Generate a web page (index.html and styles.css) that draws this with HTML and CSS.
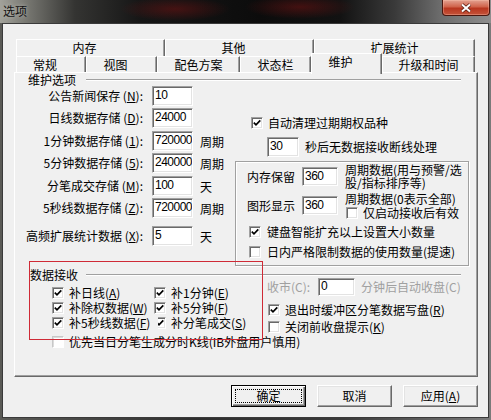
FILE: index.html
```html
<!DOCTYPE html>
<html>
<head>
<meta charset="utf-8">
<title>选项</title>
<link rel="stylesheet" href="styles.css">
</head>
<body>
<div class="window">
  <div class="titlebar">
    <span class="title">选项</span>
    <span class="close"><svg viewBox="0 0 14 10" class="xicon"><path class="xo" d="M3 1.5L11 8.5M11 1.5L3 8.5"/><path class="xi" d="M3 1.5L11 8.5M11 1.5L3 8.5"/></svg></span>
  </div>
  <div class="frame">
    <div class="tabs">
      <div class="tabrow back">
        <div class="tab w149 short">内存</div>
        <div class="tab w149 short">其他</div>
        <div class="tab w161">扩展统计</div>
      </div>
      <div class="tabrow front">
        <div class="tab w70 short">常规</div>
        <div class="tab w71 short">视图</div>
        <div class="tab w83">配色方案</div>
        <div class="tab w71">状态栏</div>
        <div class="tab w71 short sel">维护</div>
        <div class="tab w93">升级和时间</div>
      </div>
    </div>
    <div class="panel">
      <div class="group-head"><span>维护选项</span><i class="rule"></i></div>
      <div class="upper">
        <div class="fields">
          <span class="lbl">公告新闻保存 (<u>N</u>):</span><span class="inp w41">10</span><span class="unit"></span>
          <span class="lbl">日线数据存储 (<u>D</u>):</span><span class="inp w41">24000</span><span class="unit"></span>
          <span class="lbl">1分钟数据存储 (<u>1</u>):</span><span class="inp w41">720000</span><span class="unit">周期</span>
          <span class="lbl">5分钟数据存储 (<u>5</u>):</span><span class="inp w41">240000</span><span class="unit">周期</span>
          <span class="lbl">分笔成交存储 (<u>M</u>):</span><span class="inp w41">100</span><span class="unit">天</span>
          <span class="lbl">5秒线数据存储 (<u>Z</u>):</span><span class="inp w41">720000</span><span class="unit">周期</span>
          <span class="lbl">高频扩展统计数据 (<u>X</u>):</span><span class="inp w41">5</span><span class="unit">天</span>
        </div>
        <div class="side">
          <div class="chk auto-clean"><span class="cb"><svg viewBox="0 0 10 10"><path d="M1.8 4.6l2.2 2.2 4.3-4.4"/></svg></span><span class="t">自动清理过期期权品种</span></div>
          <div class="sec-row"><span class="inp w32">30</span><span class="sec-txt">秒后无数据接收断线处理</span></div>
          <div class="box">
            <div class="box-row row-a">
              <span class="box-lbl">内存保留</span>
              <span class="inp w36">360</span>
              <span class="note">周期数据(用与预警/选<br>股/指标排序等)</span>
            </div>
            <div class="box-row row-b">
              <span class="box-lbl">图形显示</span>
              <span class="inp w36">360</span>
              <div class="stack">
                <span class="note-line">周期数据(0表示全部)</span>
                <div class="chk only-recv"><span class="cb"></span><span class="t">仅启动接收后有效</span></div>
              </div>
            </div>
            <div class="chk row-c"><span class="cb"><svg viewBox="0 0 10 10"><path d="M1.8 4.6l2.2 2.2 4.3-4.4"/></svg></span><span class="t">键盘智能扩充以上设置大小数量</span></div>
            <div class="chk row-d"><span class="cb"></span><span class="t">日内严格限制数据的使用数量(提速)</span></div>
          </div>
        </div>
      </div>
      <div class="group-head second"><span>数据接收</span><i class="rule"></i></div>
      <div class="recv">
        <div class="recv-left">
          <div class="chk"><span class="cb"><svg viewBox="0 0 10 10"><path d="M1.8 4.6l2.2 2.2 4.3-4.4"/></svg></span><span class="t">补日线(<u>A</u>)</span></div>
          <div class="chk"><span class="cb"><svg viewBox="0 0 10 10"><path d="M1.8 4.6l2.2 2.2 4.3-4.4"/></svg></span><span class="t">补1分钟(<u>E</u>)</span></div>
          <div class="chk"><span class="cb"><svg viewBox="0 0 10 10"><path d="M1.8 4.6l2.2 2.2 4.3-4.4"/></svg></span><span class="t">补除权数据(<u>W</u>)</span></div>
          <div class="chk"><span class="cb"><svg viewBox="0 0 10 10"><path d="M1.8 4.6l2.2 2.2 4.3-4.4"/></svg></span><span class="t">补5分钟(<u>F</u>)</span></div>
          <div class="chk"><span class="cb"><svg viewBox="0 0 10 10"><path d="M1.8 4.6l2.2 2.2 4.3-4.4"/></svg></span><span class="t">补5秒线数据(<u>F</u>)</span></div>
          <div class="chk"><span class="cb clipped"><svg viewBox="0 0 10 10"><path d="M1.8 4.6l2.2 2.2 4.3-4.4"/></svg></span><span class="t">补分笔成交(<u>S</u>)</span></div>
        </div>
        <div class="recv-right">
          <div class="close-row"><span class="gray close-lbl">收市(C):</span><span class="inp w37">0</span><span class="gray after">分钟后自动收盘(C)</span></div>
          <div class="chk r2"><span class="cb"><svg viewBox="0 0 10 10"><path d="M1.8 4.6l2.2 2.2 4.3-4.4"/></svg></span><span class="t">退出时缓冲区分笔数据写盘(<u>R</u>)</span></div>
          <div class="chk r3"><span class="cb"></span><span class="t">关闭前收盘提示(<u>K</u>)</span></div>
        </div>
      </div>
      <div class="chk last"><span class="cb dis"></span><span class="t">优先当日分笔生成分时K线(IB外盘用户慎用)</span></div>
      <div class="annot"></div>
    </div>
    <div class="buttons">
      <div class="btn default">确定</div>
      <div class="btn">取消</div>
      <div class="btn">应用(<u>A</u>)</div>
    </div>
  </div>
</div>
</body>
</html>
```
FILE: styles.css
```css
* { box-sizing: border-box; }
html, body { margin: 0; padding: 0; }
body {
  width: 491px;
  height: 420px;
  overflow: hidden;
  background: #4a4a4a;
  font-family: "Noto Sans CJK SC", "Noto Sans", sans-serif;
  font-size: 12px;
  line-height: 12px;
  color: #000;
}
u { text-decoration: underline; text-underline-offset: 1px; }

.window {
  width: 491px;
  height: 420px;
  display: flex;
  flex-direction: column;
  background: linear-gradient(90deg, #5a5a56 0, #2e2e2e 40%, #3a3a3a 70%, #7a7a7a 100%);
}

.titlebar {
  height: 23px;
  flex: none;
  display: flex;
  align-items: flex-start;
  background:
    radial-gradient(ellipse 55px 12px at 175px 9px, rgba(110, 18, 18, 0.55), transparent),
    radial-gradient(ellipse 55px 12px at 300px 7px, rgba(110, 18, 18, 0.55), transparent),
    linear-gradient(90deg, #a2a29b 0, #7a7a74 25px, #343432 75px, #161616 140px, #0c0c0c 260px, #121212 340px, #3a3a3a 395px, #6c6c6c 440px, #8e8e8e 491px);
}
.title {
  padding: 4px 0 0 3px;
  line-height: 13px;
  color: #111;
  text-shadow: 0 0 4px rgba(235, 235, 225, 0.55);
}
.close {
  margin-left: auto;
  margin-right: 1px;
  width: 48px;
  height: 16px;
  border: 1px solid #4a160e;
  border-top: none;
  border-radius: 0 0 4px 4px;
  background: linear-gradient(180deg, #e3a291 0, #d0634b 45%, #b8361f 55%, #c4533a 100%);
  box-shadow: inset 0 0 0 1px rgba(255, 200, 180, 0.35);
  display: flex;
  align-items: center;
  justify-content: center;
}
.xicon { width: 14px; height: 10px; display: block; }
.xicon .xo { stroke: #5a1d12; stroke-width: 3.6; fill: none; }
.xicon .xi { stroke: #fff; stroke-width: 2; fill: none; }

.frame {
  margin-left: 2px;
  width: 487px;
  height: 395px;
  border: 1px solid #3a3a3a;
  background: #f0f0f0;
  padding-top: 15px;
}

.tabs { margin-left: 13px; }
.tabrow { display: flex; }
.tab {
  border-top: 1px solid #fff;
  border-left: 1px solid #fff;
  border-right: 1px solid #696969;
  box-shadow: inset -1px 0 #a0a0a0;
  background: #f0f0f0;
  text-align: center;
  white-space: nowrap;
}
.tab.short { padding-right: 12px; }
.w149 { width: 149px; }
.w161 { width: 161px; }
.w70 { width: 70px; }
.w71 { width: 71px; }
.w83 { width: 83px; }
.w93 { width: 93px; }
.tabrow.back .tab { height: 17px; line-height: 16px; }
.tabrow.front { height: 16px; align-items: flex-start; }
.tabrow.front .tab { height: 16px; line-height: 15px; }
.tabrow.front .tab.sel {
  margin-top: -3px;
  height: 21px;
  line-height: 16px;
  position: relative;
  z-index: 1;
}

.panel {
  position: relative;
  margin-left: 11px;
  width: 464px;
  height: 305px;
  border-top: 1px solid #fff;
  border-left: 1px solid #fff;
  border-right: 1px solid #696969;
  border-bottom: 1px solid #696969;
  box-shadow: inset -1px -1px #a0a0a0;
}

.group-head {
  display: flex;
  align-items: center;
  height: 12px;
  margin-top: 1px;
  padding-left: 13px;
}
.group-head .rule {
  flex: 1;
  height: 2px;
  margin-left: 10px;
  margin-right: 16px;
  border-top: 1px solid #a0a0a0;
  border-bottom: 1px solid #fff;
}
.group-head.second { margin-top: 3px; padding-left: 15px; }
.group-head.second .rule { margin-left: 8px; }

.upper { display: flex; align-items: flex-start; }

.fields {
  width: 220px;
  display: grid;
  grid-template-columns: 137px 48px auto;
  grid-template-rows: 22px 23px 22px 23px 22px 28px 20px;
  align-items: start;
}
.lbl {
  text-align: right;
  padding-right: 9px;
  line-height: 20px;
  white-space: nowrap;
}
.unit { line-height: 21px; }

.inp {
  display: block;
  height: 20px;
  background: #fff;
  border: 1px solid;
  border-color: #a0a0a0 #fff #fff #a0a0a0;
  box-shadow: inset 1px 1px #696969, inset -1px -1px #e3e3e3;
  padding-left: 2px;
  font-family: "Liberation Sans", Arial, sans-serif;
  font-size: 12px;
  letter-spacing: -0.5px;
  line-height: 17px;
  white-space: nowrap;
  overflow: hidden;
}
.w41 { width: 41px; }
.w32 { width: 32px; }
.w36 { width: 36px; height: 19px; line-height: 16px; }
.w37 { width: 37px; height: 18px; line-height: 15px; }

.cb {
  flex: none;
  width: 12px;
  height: 12px;
  background: #fff;
  border: 1px solid;
  border-color: #a0a0a0 #fff #fff #a0a0a0;
  box-shadow: inset 1px 1px #696969, inset -1px -1px #e3e3e3;
  display: flex;
  align-items: center;
  justify-content: center;
}
.cb svg { width: 10px; height: 10px; display: block; }
.cb path { fill: none; stroke: #000; stroke-width: 1.7; }
.cb.dis {
  border-color: #c8c8c8 #fff #fff #c8c8c8;
  box-shadow: inset 1px 1px #dcdcdc;
}
.cb.clipped { clip-path: inset(0 0 0 4px); }

.chk {
  display: flex;
  align-items: center;
  gap: 5px;
  white-space: nowrap;
}
.t { white-space: nowrap; }

.side { width: 234px; display: flex; flex-direction: column; }
.auto-clean { margin-top: 31px; padding-left: 16px; height: 12px; }
.sec-row { margin-top: 8px; padding-left: 32px; display: flex; align-items: center; height: 20px; }
.sec-txt { margin-left: 6px; }

.box {
  margin-top: 4px;
  width: 234px;
  height: 105px;
  border: 1px solid #a0a0a0;
  box-shadow: inset 1px 1px #fff, 1px 1px #fff;
  display: flex;
  flex-direction: column;
}
.box-row { display: flex; align-items: flex-start; padding-left: 11px; }
.box-lbl { width: 48px; line-height: 19px; white-space: nowrap; }
.box-row .inp { margin-left: 7px; }
.row-a { margin-top: 5px; }
.note { margin-left: 7px; margin-top: -4px; line-height: 13px; white-space: nowrap; }
.row-b { margin-top: 7px; }
.stack { margin-left: 7px; margin-top: -4px; display: flex; flex-direction: column; }
.note-line { line-height: 13px; white-space: nowrap; }
.only-recv { margin-top: 2px; padding-left: 1px; height: 12px; }
.row-c { margin-top: 7px; padding-left: 13px; height: 12px; gap: 6px; }
.row-d { margin-top: 8px; padding-left: 13px; height: 12px; gap: 6px; }

.recv { display: flex; align-items: flex-start; margin-top: -3px; }
.recv-left {
  width: 252px;
  margin-top: 7px;
  padding-left: 37px;
  display: grid;
  grid-template-columns: 102px auto;
  grid-auto-rows: 15px;
}
.recv-right { display: flex; flex-direction: column; }
.close-row { display: flex; align-items: center; height: 18px; }
.gray { color: #a0a0a0; white-space: nowrap; }
.close-lbl { width: 51px; }
.after { margin-left: 6px; }
.recv-right .r2 { margin-top: 7px; height: 14px; padding-left: 1px; }
.recv-right .r3 { margin-top: 3px; height: 14px; padding-left: 1px; }

.chk.last { margin-top: 1px; height: 14px; padding-left: 37px; }

.annot {
  position: absolute;
  left: 14px;
  top: 188px;
  width: 234px;
  height: 79px;
  border: 1px solid #cf2a36;
}

.buttons {
  margin-top: 8px;
  display: flex;
  justify-content: flex-end;
  gap: 11px;
  padding-right: 10px;
}
.btn {
  width: 75px;
  height: 22px;
  background: #f0f0f0;
  border: 1px solid;
  border-color: #fff #696969 #696969 #fff;
  box-shadow: inset -1px -1px #a0a0a0, inset 1px 1px #e3e3e3;
  text-align: center;
  line-height: 20px;
}
.btn.default {
  border: 1px solid #000;
  box-shadow: inset 1px 1px #fff, inset -1px -1px #696969, inset -2px -2px #a0a0a0;
  outline: 1px dotted #000;
  outline-offset: -5px;
}
```
